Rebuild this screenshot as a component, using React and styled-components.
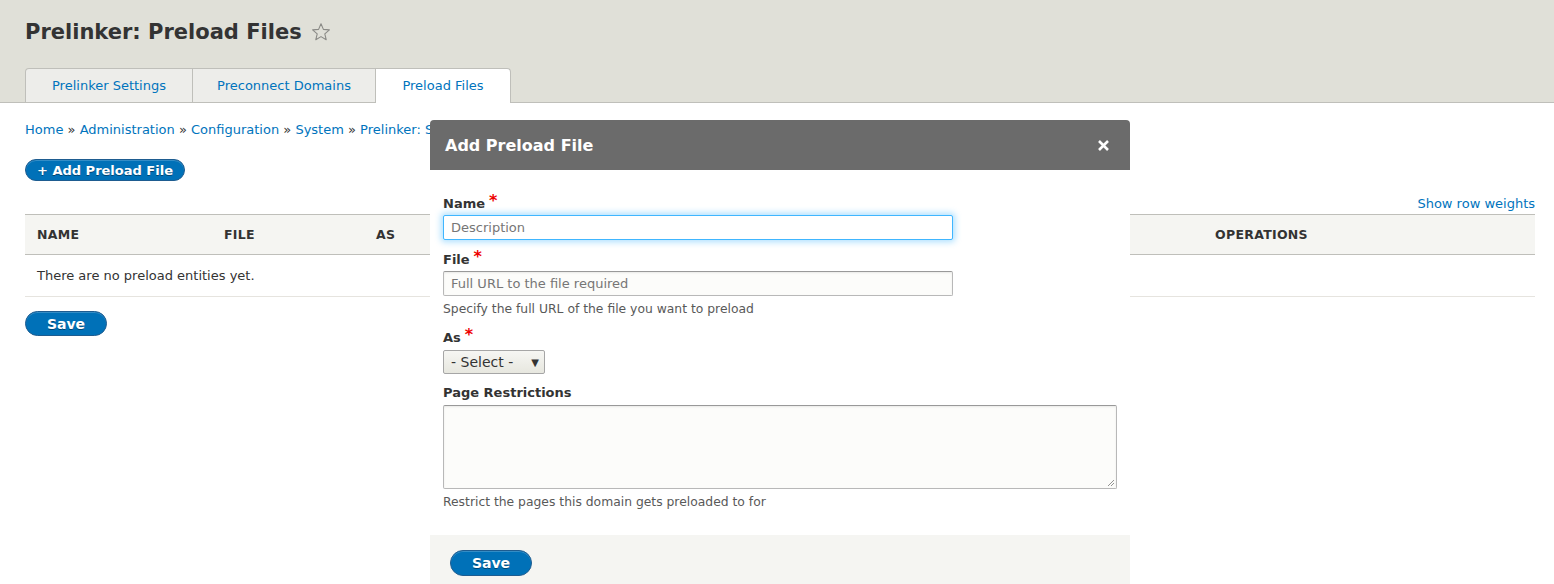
import React from 'react';
import styled, { createGlobalStyle } from 'styled-components';

const GlobalStyle = createGlobalStyle`
    html, body {
        margin: 0;
        padding: 0;
        background: #fff;
    }
    body {
        font-family: "DejaVu Sans", Verdana, sans-serif;
        font-size: 13px;
        color: #333;
        overflow: hidden;
    }
`;

const Page = styled.div`
    position: relative;
    width: 1554px;
    height: 584px;
    overflow: hidden;
`;

const Header = styled.div`
    background: #e0e0d8;
    border-bottom: 1px solid #bfbfba;
    padding: 18px 25px 0;
    height: 84px;
    box-sizing: content-box;
    display: flex;
    flex-direction: column;
`;

const Title = styled.h1`
    margin: 0;
    font-size: 21px;
    font-weight: 700;
    color: #333;
    line-height: 28px;
    display: flex;
    align-items: center;
    gap: 9px;
`;

const Tabs = styled.ul`
    list-style: none;
    margin: 22px 0 0;
    padding: 0;
    display: flex;
`;

const Tab = styled.li`
    box-sizing: border-box;
    display: flex;
    align-items: center;
    justify-content: center;
    white-space: nowrap;
    border: 1px solid #bfbfba;
    border-bottom: none;
    border-left-width: ${(p) => (p.$first ? '1px' : '0')};
    border-radius: ${(p) => (p.$first ? '4px 0 0 0' : p.$active ? '0 4px 0 0' : '0')};
    background: ${(p) => (p.$active ? '#fff' : '#ededea')};
    color: #0074bd;
    width: ${(p) => p.$w}px;
    margin-bottom: ${(p) => (p.$active ? '-1px' : '0')};
    height: ${(p) => (p.$active ? '35px' : '34px')};
    padding-bottom: ${(p) => (p.$active ? '1px' : '0')};
`;

const Content = styled.div`
    padding: 0 19px 0 25px;
`;

const Breadcrumb = styled.div`
    color: #0074bd;
    margin-top: 18px;
    line-height: 17px;
    span {
        color: #333;
    }
`;

const Button = styled.button`
    font-family: "DejaVu Sans", Verdana, sans-serif;
    background: #0071b8;
    color: #fff;
    border: 1px solid #1e5c90;
    border-radius: 20px;
    font-weight: 700;
    font-size: ${(p) => (p.$small ? '13px' : '14px')};
    padding: 0;
    height: ${(p) => p.$h}px;
    width: ${(p) => p.$w}px;
    box-shadow: inset 0 1px 0 rgba(255, 255, 255, 0.2);
    text-shadow: 0 1px 0 rgba(0, 0, 0, 0.4);
    cursor: pointer;
`;

const ActionRow = styled.div`
    margin-top: 21px;
    height: 22px;
`;

const WeightsRow = styled.div`
    display: flex;
    justify-content: flex-end;
    margin-top: 14px;
    color: #0074bd;
    line-height: 17px;
`;

const Table = styled.div`
    margin-top: 2px;
    width: 1510px;
`;

const HeadRow = styled.div`
    display: grid;
    grid-template-columns: 187px 152px 839px 1fr;
    height: 41px;
    align-items: center;
    background: #f5f5f2;
    border-top: 1px solid #bfbfba;
    border-bottom: 1px solid #bfbfba;
    box-sizing: border-box;
    padding-left: 12px;
`;

const HeadCell = styled.div`
    font-weight: 700;
    text-transform: uppercase;
    font-size: 12.5px;
    letter-spacing: 0.3px;
    color: #333;
`;

const EmptyRow = styled.div`
    height: 41px;
    display: flex;
    align-items: center;
    padding-left: 12px;
    border-bottom: 1px solid #e6e4df;
`;

const SaveRow = styled.div`
    margin-top: 14px;
`;

const Dialog = styled.div`
    position: absolute;
    left: 430px;
    top: 120px;
    width: 700px;
    height: 480px;
    background: #fff;
    border-radius: 4px 4px 0 0;
    display: flex;
    flex-direction: column;
`;

const DialogBar = styled.div`
    background: #6b6b6b;
    height: 50px;
    flex: none;
    border-radius: 4px 4px 0 0;
    display: flex;
    align-items: center;
    justify-content: space-between;
    padding: 0 20px 0 15px;
    color: #fff;
`;

const DialogTitle = styled.div`
    font-size: 16px;
    font-weight: 700;
`;

const Close = styled.div`
    display: flex;
    align-items: center;
`;

const DialogBody = styled.div`
    padding: 23px 13px 0;
    height: 365px;
    flex: none;
    box-sizing: border-box;
    display: flex;
    flex-direction: column;
`;

const Field = styled.div`
    margin-bottom: ${(p) => p.$mb ?? 12}px;
`;

const Label = styled.label`
    display: block;
    font-weight: 700;
    font-size: 13px;
    color: #333;
    line-height: 16px;
    margin-bottom: ${(p) => p.$mb ?? 3}px;
    b {
        color: #e00;
        font-size: 16px;
        margin-left: 4px;
        vertical-align: 2px;
    }
`;

const Input = styled.input`
    font-family: "DejaVu Sans", Verdana, sans-serif;
    font-size: 13px;
    width: 510px;
    height: 25px;
    box-sizing: border-box;
    padding: 0 7px;
    border: 1px solid ${(p) => (p.$focus ? '#40b6ff' : '#b8b8b8')};
    border-top-color: ${(p) => (p.$focus ? '#40b6ff' : '#999')};
    border-radius: 2px;
    background: ${(p) => (p.$focus ? '#fff' : '#fcfcfa')};
    box-shadow: ${(p) =>
        p.$focus ? '0 0 0.5em 0.1em hsla(203, 100%, 60%, 0.4)' : 'inset 0 1px 2px rgba(0,0,0,0.08)'};
    color: #595959;
    outline: none;
    display: block;
    &::placeholder {
        color: #767676;
    }
`;

const Description = styled.div`
    font-size: 12.35px;
    color: #595959;
    margin-top: 6px;
    line-height: 15px;
`;

const Select = styled.div`
    width: 102px;
    height: 24px;
    box-sizing: border-box;
    border: 1px solid #a6a6a6;
    border-radius: 2px;
    background: linear-gradient(#f6f6f3, #e7e7df);
    display: flex;
    align-items: center;
    justify-content: space-between;
    padding: 0 5px 0 7px;
    font-size: 14px;
    color: #333;
`;

const Caret = styled.span`
    font-size: 10px;
    color: #333;
`;

const TextArea = styled.div`
    width: 674px;
    height: 84px;
    box-sizing: border-box;
    border: 1px solid #b8b8b8;
    border-top-color: #999;
    border-radius: 2px;
    background: #fcfcfa;
    box-shadow: inset 0 1px 2px rgba(0, 0, 0, 0.08);
    position: relative;
`;

const Grip = styled.svg`
    position: absolute;
    right: 1px;
    bottom: 1px;
`;

const ButtonPane = styled.div`
    background: #f5f5f2;
    flex: 1;
    padding: 15px 20px 0;
`;

function Star() {
    return (
        <svg width='20' height='20' viewBox='0 0 20 20'>
            <path
                d='M10 1.8l2.4 5.6 6 .5-4.6 3.9 1.4 5.9L10 14.6l-5.2 3.1 1.4-5.9L1.6 7.9l6-.5z'
                fill='none'
                stroke='#8a8a86'
                strokeWidth='1.1'
                strokeLinejoin='round'
            />
        </svg>
    );
}

function App() {
    return (
        <Page>
            <GlobalStyle />
            <Header>
                <Title>
                    Prelinker: Preload Files <Star />
                </Title>
                <Tabs>
                    <Tab $first $w={168}>Prelinker Settings</Tab>
                    <Tab $w={183}>Preconnect Domains</Tab>
                    <Tab $active $w={135}>Preload Files</Tab>
                </Tabs>
            </Header>
            <Content>
                <Breadcrumb>
                    Home <span>»</span> Administration <span>»</span> Configuration <span>»</span> System{' '}
                    <span>»</span> Prelinker: Settings
                </Breadcrumb>
                <ActionRow>
                    <Button $small $w={160} $h={22}>
                        + Add Preload File
                    </Button>
                </ActionRow>
                <WeightsRow>Show row weights</WeightsRow>
                <Table>
                    <HeadRow>
                        <HeadCell>Name</HeadCell>
                        <HeadCell>File</HeadCell>
                        <HeadCell>As</HeadCell>
                        <HeadCell>Operations</HeadCell>
                    </HeadRow>
                    <EmptyRow>There are no preload entities yet.</EmptyRow>
                </Table>
                <SaveRow>
                    <Button $w={82} $h={25}>Save</Button>
                </SaveRow>
            </Content>

            <Dialog>
                <DialogBar>
                    <DialogTitle>Add Preload File</DialogTitle>
                    <Close>
                        <svg width='13' height='13' viewBox='0 0 13 13'>
                            <path d='M2 2l9 9M11 2l-9 9' stroke='#fff' strokeWidth='2.6' />
                        </svg>
                    </Close>
                </DialogBar>
                <DialogBody>
                    <Field $mb={9}>
                        <Label>
                            Name<b>*</b>
                        </Label>
                        <Input $focus placeholder='Description' />
                    </Field>
                    <Field $mb={10}>
                        <Label>
                            File<b>*</b>
                        </Label>
                        <Input placeholder='Full URL to the file required' />
                        <Description>Specify the full URL of the file you want to preload</Description>
                    </Field>
                    <Field $mb={11}>
                        <Label $mb={4}>
                            As<b>*</b>
                        </Label>
                        <Select>
                            - Select - <Caret>▼</Caret>
                        </Select>
                    </Field>
                    <Field>
                        <Label $mb={4}>Page Restrictions</Label>
                        <TextArea>
                            <Grip width='8' height='8' viewBox='0 0 8 8'>
                                <path d='M7 1L1 7M7 4L4 7' stroke='#777' strokeWidth='0.8' />
                            </Grip>
                        </TextArea>
                        <Description>Restrict the pages this domain gets preloaded to for</Description>
                    </Field>
                </DialogBody>
                <ButtonPane>
                    <Button $w={82} $h={26}>Save</Button>
                </ButtonPane>
            </Dialog>
        </Page>
    );
}

export default App;
